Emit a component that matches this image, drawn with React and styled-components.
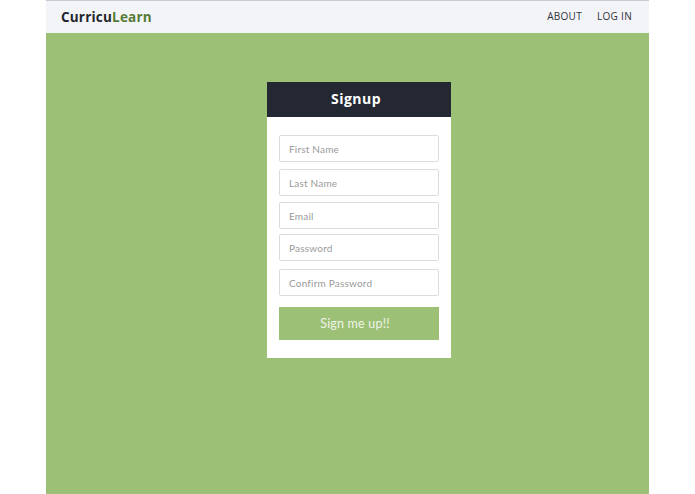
import React from "react";
import styled, { createGlobalStyle } from "styled-components";

const Global = createGlobalStyle`
  html, body { margin: 0; padding: 0; background: #ffffff; }
  body { font-family: Lato, "Open Sans", "Liberation Sans", sans-serif; }
  * { box-sizing: border-box; }
`;

const Page = styled.div`
  width: 603px;
  margin-left: 46px;
  height: 494px;
  display: flex;
  flex-direction: column;
  border-top: 1px solid #c9cbd1;
`;

const NavBar = styled.header`
  height: 32px;
  background: #f3f4f8;
  display: flex;
  align-items: center;
  justify-content: space-between;
  padding: 0 17px 0 15px;
`;

const Brand = styled.div`
  font-family: "Open Sans", Lato, sans-serif;
  font-weight: 700;
  font-size: 13.5px;
  color: #23262c;
  letter-spacing: 0.2px;
`;

const BrandAccent = styled.span`
  color: #557a35;
`;

const NavLinks = styled.nav`
  display: flex;
  gap: 15px;
  margin-top: -2px;
`;

const NavLink = styled.a`
  font-family: "Open Sans", Lato, sans-serif;
  font-size: 10px;
  letter-spacing: 0.3px;
  color: #2f3238;
  text-decoration: none;
`;

const Stage = styled.main`
  flex: 1;
  background: #9dc077;
  display: flex;
  justify-content: center;
  align-items: flex-start;
  padding-top: 49px;
  padding-left: 23px;
`;

const Card = styled.section`
  width: 184px;
  background: #ffffff;
  display: flex;
  flex-direction: column;
`;

const CardHeader = styled.h1`
  margin: 0;
  height: 35px;
  padding: 0 6px 3px 0;
  background: #242833;
  color: #ffffff;
  font-family: "Open Sans", Lato, sans-serif;
  font-weight: 700;
  font-size: 14px;
  display: flex;
  align-items: center;
  justify-content: center;
  letter-spacing: 0.5px;
`;

const Form = styled.form`
  display: flex;
  flex-direction: column;
  padding: 18px 12px 18px 12px;
`;

const Field = styled.input`
  width: 160px;
  height: 27px;
  border: 1px solid #dcdcdc;
  border-radius: 2px;
  padding: 0 9px;
  font-family: Lato, "Open Sans", sans-serif;
  font-size: 10px;
  color: #333;
  margin-bottom: ${(p) => p.$gap}px;
  outline: none;
  &::placeholder { color: #9a9a9a; letter-spacing: 0.2px; }
`;

const Submit = styled.button`
  width: 160px;
  height: 33px;
  border: none;
  padding: 0 8px 0 0;
  background: #9dc077;
  color: #eef4e6;
  font-family: Lato, "Open Sans", sans-serif;
  font-size: 12.5px;
  letter-spacing: 0.2px;
  cursor: pointer;
  margin-top: 4px;
`;

const fields = [
  { ph: "First Name", gap: 7, type: "text" },
  { ph: "Last Name", gap: 6, type: "text" },
  { ph: "Email", gap: 5, type: "email" },
  { ph: "Password", gap: 8, type: "password" },
  { ph: "Confirm Password", gap: 7, type: "password" },
];

export default function App() {
  return (
    <>
      <Global />
      <Page>
        <NavBar>
          <Brand>
            Curricu<BrandAccent>Learn</BrandAccent>
          </Brand>
          <NavLinks>
            <NavLink href="#">ABOUT</NavLink>
            <NavLink href="#">LOG IN</NavLink>
          </NavLinks>
        </NavBar>
        <Stage>
          <Card>
            <CardHeader>Signup</CardHeader>
            <Form onSubmit={(e) => e.preventDefault()}>
              {fields.map((f) => (
                <Field key={f.ph} type={f.type} placeholder={f.ph} $gap={f.gap} />
              ))}
              <Submit type="submit">Sign me up!!</Submit>
            </Form>
          </Card>
        </Stage>
      </Page>
    </>
  );
}
